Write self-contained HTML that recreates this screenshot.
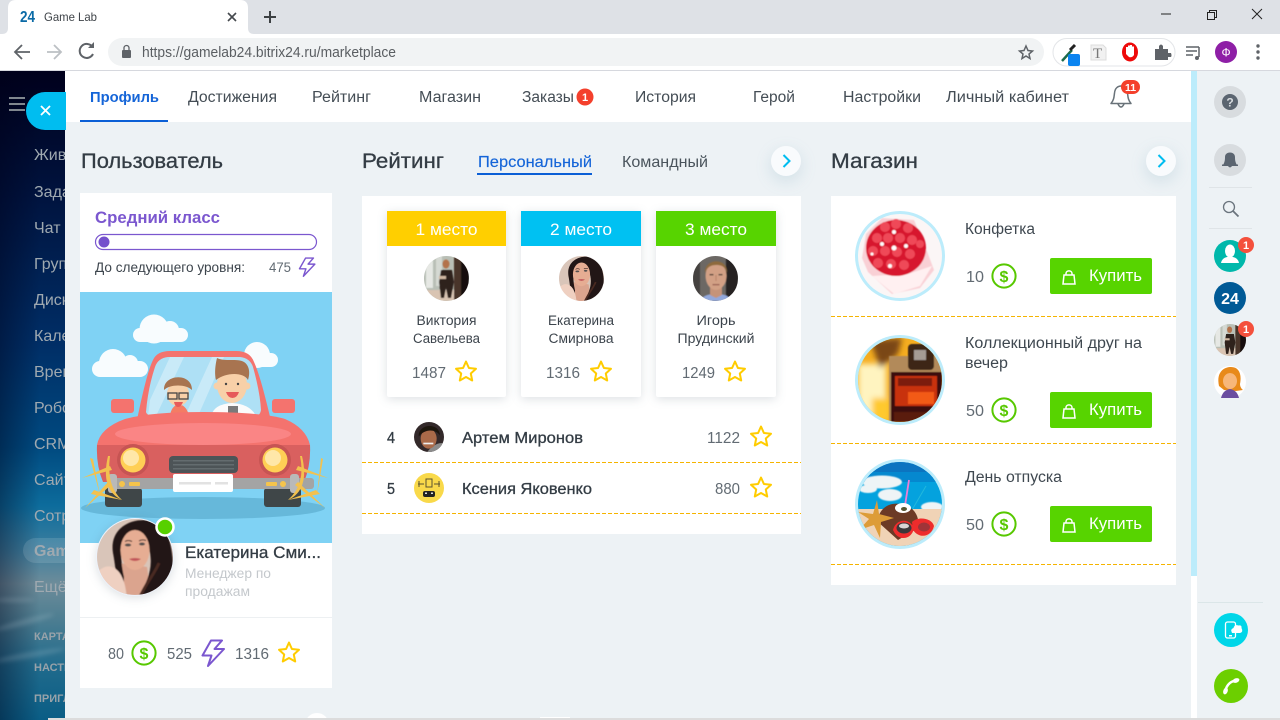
<!DOCTYPE html>
<html lang="ru"><head><meta charset="utf-8"><title>Game Lab</title>
<style>
html,body{margin:0;padding:0;width:1280px;height:720px;overflow:hidden;background:#edf2f5}
svg{display:block;position:absolute;left:0;top:0}
text{font-family:"Liberation Sans","DejaVu Sans",sans-serif;fill:#333c44;font-size:15px}
.h{font-size:21px;stroke:#333c44;stroke-width:.3}
.n{font-size:15.5px;fill:#444d55}
.s{fill:#9fa9b0;font-size:16px}
.c{fill:#98a2a9;font-size:11px;font-weight:bold}
.t{font-size:13.5px;fill:#3c444c;text-anchor:middle}
.v{font-size:15.5px;fill:#626b73}
.sb{stroke:#333c44;stroke-width:.3;font-size:15.500px}
.w{font-size:17px;fill:#fff;text-anchor:middle}
.b{font-size:16.5px;fill:#fff}
.p{font-size:15.5px;fill:#3f4850}
.dash{stroke:#f5b400;stroke-width:1;stroke-dasharray:4 2}
.shadow{filter:drop-shadow(0 2px 5px rgba(40,60,80,.16))}
.btnsh{filter:drop-shadow(0 5px 8px rgba(60,130,160,.16))}
</style></head>
<body>
<svg width="1280" height="720" viewBox="0 0 1280 720" xmlns="http://www.w3.org/2000/svg">
<defs>
<linearGradient id="sky" x1="0" y1="0" x2="0" y2="1">
<stop offset="0" stop-color="#00001c"/><stop offset=".2" stop-color="#001440"/><stop offset=".42" stop-color="#002e66"/><stop offset=".58" stop-color="#004a80"/><stop offset=".67" stop-color="#0d6c9c"/><stop offset=".74" stop-color="#3f7f9e"/><stop offset=".79" stop-color="#6d8c9a"/><stop offset=".84" stop-color="#507f92"/><stop offset=".92" stop-color="#1f6a8c"/><stop offset="1" stop-color="#0a5d85"/>
</linearGradient>
<linearGradient id="skyx" x1="0" y1="0" x2="1" y2="0"><stop offset="0" stop-color="#000018" stop-opacity=".4"/><stop offset=".6" stop-color="#000018" stop-opacity="0"/></linearGradient>
<filter id="bl05" x="-10%" y="-10%" width="120%" height="120%"><feGaussianBlur stdDeviation=".5"/></filter>
<filter id="bl1" x="-10%" y="-10%" width="120%" height="120%"><feGaussianBlur stdDeviation="1"/></filter>
<filter id="bl2"><feGaussianBlur stdDeviation="2"/></filter>
<filter id="bl3"><feGaussianBlur stdDeviation="3"/></filter>
<symbol id="star" viewBox="-12 -12 24 24" overflow="visible"><path d="M0-10.5L2.9-4 10-3.2 4.8 1.5 6.2 8.5 0 5-6.2 8.5-4.8 1.5-10-3.2-2.9-4Z" fill="#fff" stroke="#ffcc00" stroke-width="2" stroke-linejoin="round"/></symbol>
<symbol id="bolt" viewBox="-12 -14 24 28"><path d="M-2-12.5L-10.5 2.5H-1.5L-5 13 11-4H1.5L9-12.5Z" fill="#fff" stroke="#7b57cf" stroke-width="2" stroke-linejoin="round"/></symbol>
<symbol id="bag" viewBox="0 0 14 16"><path d="M2 6H12L13 15H1ZM4 6V4.5C4 1 10 1 10 4.500V6" fill="none" stroke="#fff" stroke-width="1.500"/></symbol>
<clipPath id="c76"><circle cx="38" cy="38" r="38"/></clipPath>
<clipPath id="c45"><circle cx="22.500" cy="22.500" r="22.500"/></clipPath>
<clipPath id="c84"><circle cx="42" cy="42" r="42"/></clipPath>
<symbol id="ekat" viewBox="0 0 76 76">
<g clip-path="url(#c76)"><rect width="76" height="76" fill="#d9c5b9"/>
<g filter="url(#bl05)">
<path d="M22 44L30 76H54L50 48Z" fill="#dba48e"/>
<path d="M16 34C12 8 36-2 54 2 72 6 78 26 76 76H42C50 64 56 50 53 34 50 18 36 12 29 18 23 24 23 40 27 58L26 76H20C20 60 18 44 16 34Z" fill="#231312"/>
<ellipse cx="38" cy="31" rx="14.500" ry="20" fill="#e6ad93"/>
<path d="M0 54C8 44 18 46 24 56 28 64 29 70 29 76H8C4 68 0 60 0 54Z" fill="#efd0c1"/>
<path d="M44 76C48 66 58 54 62 44" stroke="#4a2a22" stroke-width="3" fill="none"/>
<ellipse cx="31" cy="26" rx="3.200" ry="1.500" fill="#54504f"/><ellipse cx="45" cy="25" rx="3" ry="1.500" fill="#54504f"/>
<path d="M28 22.500Q31 20.500 35 22.500M42 22Q45 20 49 21.500" stroke="#3a2420" stroke-width="1" fill="none"/>
<path d="M32 40Q38 44 44 40Q38 38 32 40Z" fill="#c2565a"/>
</g></g></symbol>
<symbol id="vika" viewBox="0 0 45 45">
<g clip-path="url(#c45)"><rect width="45" height="45" fill="#b9bfb6"/>
<g filter="url(#bl05)"><rect x="2" width="7" height="32" fill="#e6e8e4"/><rect x="12" y="0" width="6" height="30" fill="#d5d9d3"/><rect x="30" width="15" height="45" fill="#4a342a"/><rect x="37" width="8" height="45" fill="#160e0c"/><rect y="34" width="30" height="11" fill="#d9c4b2"/>
<ellipse cx="22" cy="8" rx="3.500" ry="4.500" fill="#b3724c"/><path d="M17 14H28L30 26 27 42H24L22 32 20 42H17L15 26Z" fill="#2d201b"/><path d="M15 20H22V23H15Z" fill="#d0b8a2"/></g></g></symbol>
<symbol id="igor" viewBox="0 0 45 45">
<g clip-path="url(#c45)"><rect width="45" height="45" fill="#6c6864"/><g filter="url(#bl05)"><rect x="33" width="12" height="45" fill="#262220"/><rect width="7" height="45" fill="#454240"/>
<path d="M7 45C10 39 16 38 23 38 30 38 36 39 38 45Z" fill="#92a8dc"/><path d="M17 30H29V39L23 42 17 39Z" fill="#c69379"/><ellipse cx="23" cy="20" rx="10.500" ry="14" fill="#d2a085"/><path d="M12 17C11 2 35 1 34 17 32 10 28 9 23 9 18 9 14 11 12 17Z" fill="#8e6a3c"/><rect x="16.500" y="18" width="4" height="1.300" fill="#4a3a30"/><rect x="25.500" y="18" width="4" height="1.300" fill="#4a3a30"/><path d="M23 19V25" stroke="#b98368"/><rect x="19.500" y="28" width="7" height="1.300" fill="#9a5f52"/></g></g></symbol>
<symbol id="artem" viewBox="0 0 45 45">
<g clip-path="url(#c45)"><rect width="45" height="45" fill="#33292a"/><g filter="url(#bl05)"><path d="M20 45C26 36 36 30 45 32V45Z" fill="#8c8c8c"/><ellipse cx="22" cy="25" rx="12" ry="15" fill="#a96a4a"/><path d="M7 22C6 2 38 0 39 20 32 10 16 10 7 22Z" fill="#1d120d"/><rect x="14" y="31" width="15" height="2.500" fill="#eee"/></g></g></symbol>
<symbol id="cand" viewBox="0 0 84 84"><g clip-path="url(#c84)"><rect width="84" height="84" fill="#fbf6f6"/>
<g filter="url(#bl05)"><path d="M8 20L24 4 56 6 70 40 76 56 62 74 34 80 10 58 4 44Z" fill="#f9d0d5"/><path d="M14 62L36 80 62 72 74 52 50 60Z" fill="#fff0f1"/>
<ellipse cx="38" cy="34" rx="30" ry="28" fill="#d7192f"/>
<g fill="#ef4a58"><circle cx="27" cy="13" r="5"/><circle cx="38" cy="10" r="5"/><circle cx="50" cy="14" r="5"/><circle cx="19" cy="24" r="5"/><circle cx="30" cy="24" r="5"/><circle cx="42" cy="24" r="5"/><circle cx="54" cy="26" r="5"/><circle cx="62" cy="30" r="4"/><circle cx="15" cy="37" r="5"/><circle cx="27" cy="37" r="5"/><circle cx="39" cy="38" r="5"/><circle cx="52" cy="40" r="5"/><circle cx="20" cy="49" r="5"/><circle cx="33" cy="50" r="5"/><circle cx="46" cy="51" r="5"/></g>
<g fill="#fff"><circle cx="36" cy="18" r="2"/><circle cx="24" cy="30" r="2"/><circle cx="36" cy="34" r="2.500"/><circle cx="48" cy="32" r="2"/><circle cx="32" cy="52" r="2"/><circle cx="14" cy="40" r="1.500"/></g></g></g></symbol>
<symbol id="whisky" viewBox="0 0 84 84"><g clip-path="url(#c84)"><rect width="84" height="84" fill="#f5ad20"/>
<g filter="url(#bl3)"><rect x="0" y="26" width="28" height="58" fill="#fff4c0"/><path d="M12 2L44 0 40 16 22 30Z" fill="#7a4614"/><rect x="14" y="60" width="18" height="24" fill="#ffc92e"/></g>
<g filter="url(#bl05)"><rect x="31" y="18" width="53" height="66" fill="#b28a5a"/><rect x="33" y="34" width="51" height="50" fill="#3e0d08"/><rect x="37" y="38" width="42" height="30" fill="#c8300c"/><rect x="40" y="40" width="34" height="8" fill="#7c1a08"/><rect x="50" y="54" width="26" height="12" fill="#f25a12"/><rect x="50" y="6" width="26" height="26" rx="4" fill="#3d2518"/><rect x="56" y="12" width="12" height="10" fill="#a59c94"/><rect x="36" y="74" width="40" height="10" fill="#5a1a0c"/></g></g></symbol>
<symbol id="beach" viewBox="0 0 84 84"><g clip-path="url(#c84)"><rect width="84" height="84" fill="#04a2de"/><rect width="84" height="16" fill="#0b74c0"/><rect y="10" width="84" height="10" fill="#0588cf"/>
<g fill="#eef4f6" filter="url(#bl05)"><ellipse cx="24" cy="20" rx="20" ry="6.500"/><ellipse cx="10" cy="27" rx="9" ry="4"/><ellipse cx="32" cy="33" rx="12" ry="6"/><ellipse cx="74" cy="45" rx="11" ry="5"/></g>
<rect y="47" width="84" height="37" fill="#f0d3b6"/>
<path d="M51 18L46 50" stroke="#ee7ed6" stroke-width="1.800"/><path d="M68 24L54 48" stroke="#22b8dc" stroke-width="1"/>
<path d="M20 60C20 46 32 40 42 42 56 44 62 54 60 66L40 78Z" fill="#6c3a26"/><ellipse cx="45" cy="46" rx="8" ry="5" fill="#fff"/><ellipse cx="46" cy="47" rx="3" ry="2" fill="#553"/>
<path d="M19 38L21 52 36 56 23 60 22 76 16 63 1 68 11 57 0 50 15 52Z" fill="#dd9c38"/>
<path d="M35 68C38 56 52 56 56 66 54 78 40 80 35 68ZM54 60C60 54 74 56 76 64 74 74 62 78 55 68Z" fill="#ee2c2c"/>
<ellipse cx="46" cy="66" rx="7.500" ry="5.500" fill="#3c383a"/><ellipse cx="46" cy="64" rx="5" ry="2.500" fill="#d9d4d4"/><ellipse cx="66" cy="65" rx="6" ry="4.500" fill="#a03438"/></g></symbol>
<symbol id="coin" viewBox="0 0 26 26"><circle cx="13" cy="13" r="11.600" fill="#fff" stroke="#57c800" stroke-width="2"/></symbol>
</defs>

<!-- browser chrome -->
<rect width="1280" height="34" fill="#dee1e6"/>
<rect y="34" width="1280" height="37" fill="#fff"/>
<rect y="70" width="1280" height="1" fill="#d6d8de"/>
<path d="M0 34H2Q8 34 8 28V8Q8 0 16 0H240Q248 0 248 8V28Q248 34 254 34H256Z" fill="#fff"/>
<text x="20" y="22" font-weight="bold" textLength="15" lengthAdjust="spacingAndGlyphs" style="fill:#0a6aa6;font-size:16px">24</text>
<text x="44" y="21" textLength="53" lengthAdjust="spacingAndGlyphs" style="font-size:12px;fill:#3f4449">Game Lab</text>
<path d="M228 13L236 21M236 13L228 21" stroke="#45494e" stroke-width="1.600"/>
<path d="M270 11V23M264 17H276" stroke="#3c4043" stroke-width="2"/>
<path d="M1161 14H1171" stroke="#222" stroke-width="1"/>
<path d="M1207.500 12.500H1214.500V19.500H1207.500ZM1209.500 12V10.500H1216.500V17.500H1215" fill="none" stroke="#222" stroke-width="1"/>
<path d="M1252 9L1262 19M1262 9L1252 19" stroke="#222" stroke-width="1"/>
<path d="M30 52H15M22 45L15 52 22 59" fill="none" stroke="#5f6368" stroke-width="1.800"/>
<path d="M47 52H61M54 45L61 52 54 59" fill="none" stroke="#bcc0c4" stroke-width="1.800"/>
<path d="M92.500 47A7 7 0 1 0 93 54" fill="none" stroke="#5f6368" stroke-width="2"/><path d="M88 48H94V42Z" fill="#5f6368"/>
<rect x="108" y="38" width="936" height="28" rx="14" fill="#f1f3f4"/>
<rect x="122" y="50" width="9" height="8" rx="1" fill="#5f6368"/><path d="M124 50V48A2.500 2.500 0 0 1 129 48V50" fill="none" stroke="#5f6368" stroke-width="1.300"/>
<text x="142" y="57" textLength="254" lengthAdjust="spacingAndGlyphs" style="font-size:14.5px;fill:#5a5e62">https://gamelab24.bitrix24.ru/marketplace</text>
<path d="M1026 46L1028 50.500 1032.500 51 1029 54 1030 58.500 1026 56 1022 58.500 1023 54 1019.500 51 1024 50.500Z" fill="none" stroke="#5f6368" stroke-width="1.500"/>
<rect x="1053" y="38.500" width="122" height="27.500" rx="13.700" fill="#fff" stroke="#e3e5e8"/>
<path d="M1062 61L1072 50" stroke="#1c6a4a" stroke-width="2.500"/><path d="M1070 50L1075 45" stroke="#222" stroke-width="3"/>
<rect x="1068" y="54" width="12" height="12" rx="2" fill="#0a84f0"/>
<path d="M1091 45H1103L1106 48V60H1091Z" fill="#f1f1f1" stroke="#ddd"/><text x="1093" y="58" style="font-family:'Liberation Serif',serif;font-size:15px;fill:#777">T</text>
<ellipse cx="1130" cy="52" rx="8" ry="9.500" fill="#ee0a0a"/><path d="M1126 50V47H1128V45.500H1130V45H1132V46.500H1134V55Q1132 58 1129 57L1126 54Z" fill="#fff"/>
<path d="M1155 49H1159V46Q1161 43 1163 46V49H1168V53H1171Q1172 56 1171 57H1168V60H1155Z" fill="#5f6368"/>
<path d="M1186 47H1199M1186 51H1197M1186 55H1193" stroke="#5f6368" stroke-width="1.500"/><path d="M1199 47V57" stroke="#5f6368" stroke-width="1.500"/><circle cx="1197" cy="58" r="2" fill="#5f6368"/>
<circle cx="1226" cy="52" r="11" fill="#8e1fa6"/><text x="1226" y="56.500" text-anchor="middle" style="font-size:12px;fill:#fff">Ф</text>
<g fill="#5f6368"><circle cx="1258" cy="46" r="1.700"/><circle cx="1258" cy="52" r="1.700"/><circle cx="1258" cy="58" r="1.700"/></g>

<!-- left sidebar -->
<rect y="71" width="66" height="649" fill="url(#sky)"/>
<rect y="71" width="66" height="649" fill="url(#skyx)"/>
<g filter="url(#bl2)" fill="#d8e2e8" opacity=".16"><ellipse cx="25" cy="622" rx="30" ry="3" transform="rotate(-15 25 622)"/><ellipse cx="30" cy="655" rx="35" ry="3" transform="rotate(-10 30 655)"/><ellipse cx="15" cy="600" rx="20" ry="2"/></g>
<g fill="#80878f"><rect x="9" y="97" width="16" height="2"/><rect x="9" y="103" width="16" height="2"/><rect x="9" y="109" width="16" height="2"/></g>
<rect x="23" y="538" width="60" height="25" rx="12.500" fill="#fff" fill-opacity=".12"/>
<text x="34" y="160" class="s">Живая лента</text>
<text x="34" y="197" class="s">Задачи и Проекты</text>
<text x="34" y="233" class="s">Чат и Звонки</text>
<text x="34" y="269" class="s">Группы</text>
<text x="34" y="305" class="s">Диск</text>
<text x="34" y="341" class="s">Календарь</text>
<text x="34" y="377" class="s">Время и отчёты</text>
<text x="34" y="413" class="s">Роботы</text>
<text x="34" y="449" class="s">CRM</text>
<text x="34" y="485" class="s">Сайты</text>
<text x="34" y="521" class="s">Сотрудники</text>
<text x="34" y="556" class="s" font-weight="bold">Game Lab</text>
<text x="34" y="592" class="s">Ещё</text>
<text x="34" y="640" class="c">КАРТА САЙТА</text>
<text x="34" y="671" class="c">НАСТРОИТЬ МЕНЮ</text>
<text x="34" y="702" class="c">ПРИГЛАСИТЬ</text>

<!-- content -->
<rect x="65" y="71" width="1126" height="649" fill="#edf2f5"/>
<rect x="65" y="71" width="1126" height="51" fill="#fff"/>
<rect x="1191" y="71" width="7" height="505" fill="#bcecfb"/>
<rect x="1191" y="576" width="6" height="142" fill="#fff"/>
<rect x="1197" y="71" width="83" height="649" fill="#edf2f5"/>
<rect x="26" y="92" width="40" height="38" fill="#00bdf0" style="clip-path:inset(0 0 0 0 round 19px 0 0 19px)"/>
<path d="M41 106L50 115M50 106L41 115" stroke="#fff" stroke-width="1.800"/>

<!-- top nav -->
<text x="90" y="102" textLength="69" lengthAdjust="spacingAndGlyphs" font-weight="bold" style="fill:#1565d8;font-size:15px">Профиль</text>
<rect x="80" y="120" width="88" height="2" fill="#0b5fd6"/>
<text x="188" y="102" class="n" textLength="89" lengthAdjust="spacingAndGlyphs">Достижения</text>
<text x="312" y="102" class="n" textLength="59" lengthAdjust="spacingAndGlyphs">Рейтинг</text>
<text x="419" y="102" class="n" textLength="62" lengthAdjust="spacingAndGlyphs">Магазин</text>
<text x="522" y="102" class="n" textLength="52" lengthAdjust="spacingAndGlyphs">Заказы</text>
<circle cx="585" cy="97" r="8.500" fill="#f4402c"/><text x="585" y="101" text-anchor="middle" font-weight="bold" style="font-size:11px;fill:#fff">1</text>
<text x="635" y="102" class="n" textLength="61" lengthAdjust="spacingAndGlyphs">История</text>
<text x="753" y="102" class="n" textLength="42" lengthAdjust="spacingAndGlyphs">Герой</text>
<text x="843" y="102" class="n" textLength="78" lengthAdjust="spacingAndGlyphs">Настройки</text>
<text x="946" y="102" class="n" textLength="123" lengthAdjust="spacingAndGlyphs">Личный кабинет</text>
<path d="M1111 103.500C1114 100 1114 97 1114.500 93 1115 88 1118 86 1121 86 1124 86 1127 88 1127.500 93 1128 97 1128 100 1131 103.500ZM1118 104Q1121 110 1124 104" fill="#fff" stroke="#697279" stroke-width="1.500" stroke-linejoin="round"/>
<rect x="1121" y="80" width="19" height="14" rx="7" fill="#f4402c"/><text x="1130.500" y="91" text-anchor="middle" font-weight="bold" style="font-size:10.500px;fill:#fff">11</text>

<!-- user column -->
<text x="81" y="168" class="h" textLength="142" lengthAdjust="spacingAndGlyphs">Пользователь</text>
<rect x="80" y="193" width="252" height="495" fill="#fff"/>
<text x="95" y="223" font-weight="bold" textLength="125" lengthAdjust="spacingAndGlyphs" style="font-size:17px;fill:#7b57cf">Средний класс</text>
<rect x="95.500" y="234.500" width="221" height="15" rx="7.500" fill="#fff" stroke="#7b57cf" stroke-width="1.200"/>
<circle cx="104" cy="242" r="5.500" fill="#7450cc"/>
<text x="95" y="272" textLength="150" lengthAdjust="spacingAndGlyphs" style="font-size:13.5px;fill:#3c444c">До следующего уровня:</text>
<text x="269" y="272" textLength="22" lengthAdjust="spacingAndGlyphs" style="font-size:13.5px;fill:#626b73">475</text>
<use href="#bolt" x="298" y="257" width="18" height="20"/>

<!-- illustration -->
<rect x="80" y="292" width="252" height="251" fill="#7fd2f4"/>
<g fill="#fff" opacity=".95">
<rect x="133" y="328" width="55" height="14" rx="7"/><circle cx="154" cy="329" r="14.500"/><circle cx="170" cy="330" r="9"/>
<rect x="92" y="361" width="56" height="16" rx="8"/><circle cx="113" cy="363" r="14"/><circle cx="130" cy="363" r="8"/>
<rect x="240" y="353" width="38" height="14" rx="7"/><circle cx="257" cy="355" r="13"/>
</g>
<ellipse cx="203" cy="508" rx="122" ry="11" fill="#66b8da"/>
<rect x="111" y="399" width="23" height="14" rx="3" fill="#f4736e"/><rect x="272" y="399" width="23" height="14" rx="3" fill="#f4736e"/>
<path d="M136 425C142 395 148 370 153 360Q157 351 170 351H236Q250 351 254 362C260 375 266 400 272 425Z" fill="#f4736e"/>
<path d="M146 412Q148 388 155 367Q158 358 168 357H240Q250 358 253 367Q260 392 261 410Q260 416 255 416H155Q147 416 146 412Z" fill="#aee0f5"/>
<path d="M150 400L170 357H184L156 416H148ZM185 416L212 357H224L198 416Z" fill="#c9eaf8"/>
<path d="M170 416Q171 406 179 404 187 406 189 416Z" fill="#f47c64"/>
<ellipse cx="178" cy="394" rx="11" ry="12" fill="#f8d0a8"/><path d="M164 390C163 374 192 372 192 390 186 384 170 384 164 390Z" fill="#a87450"/>
<rect x="168" y="393" width="9" height="6" fill="none" stroke="#444" stroke-width="1.300"/><rect x="179" y="393" width="9" height="6" fill="none" stroke="#444" stroke-width="1.300"/>
<path d="M174 402H183Q181 407 178 407Q175 407 174 402Z" fill="#e65a5a"/>
<path d="M211 416Q214 404 232 403 250 404 256 416Z" fill="#fbfbfb"/>
<rect x="228" y="406" width="10" height="11" fill="#7a7a7a"/>
<ellipse cx="232" cy="385" rx="15" ry="18" fill="#f8d0a8"/><circle cx="217" cy="386" r="3.500" fill="#f8d0a8"/><circle cx="247" cy="386" r="3.500" fill="#f8d0a8"/>
<path d="M216 380C214 372 216 362 217 358 224 362 238 358 244 362 250 366 250 374 248 380 244 372 226 372 216 380Z" fill="#a87450"/>
<path d="M226 392H239Q237 398 232.500 398Q228 398 226 392Z" fill="#e65a5a"/>
<circle cx="226" cy="384" r="1.200" fill="#444"/><circle cx="238" cy="384" r="1.200" fill="#444"/>
<rect x="166" y="417" width="17" height="3" rx="1" fill="#d9605f"/><rect x="223" y="417" width="17" height="3" rx="1" fill="#d9605f"/>
<path d="M97 445Q100 428 125 419Q150 412 203 412Q260 412 285 419Q306 428 310 445Z" fill="#f4736e"/>
<ellipse cx="203" cy="434" rx="88" ry="11" fill="#fa8585"/>
<path d="M97 445H310Q311 465 304 482H103Q96 465 97 445Z" fill="#d9605f"/>
<circle cx="133" cy="460" r="16" fill="#c65453"/><circle cx="275" cy="460" r="16" fill="#c65453"/>
<circle cx="133" cy="460" r="12.500" fill="#ffcf55"/><circle cx="275" cy="460" r="12.500" fill="#ffcf55"/><circle cx="131" cy="458" r="8" fill="#ffe7a8"/><circle cx="273" cy="458" r="8" fill="#ffe7a8"/>
<rect x="169" y="456" width="69" height="17" rx="4" fill="#4d5457"/><g fill="#646c6f"><rect x="173" y="460" width="61" height="1.500"/><rect x="173" y="464" width="61" height="1.500"/><rect x="173" y="468" width="61" height="1.500"/></g>
<rect x="105" y="488" width="37" height="19" rx="3" fill="#3f4648"/><rect x="264" y="488" width="37" height="19" rx="3" fill="#3f4648"/>
<rect x="108" y="478" width="206" height="11" rx="3" fill="#a4a4a4"/>
<rect x="108" y="474" width="9" height="19" rx="3" fill="#b9b9b9"/><rect x="290" y="474" width="9" height="19" rx="3" fill="#b9b9b9"/>
<rect x="173" y="474" width="60" height="18" rx="2" fill="#fff"/><rect x="179" y="482" width="32" height="2.500" fill="#e2e2e2"/><rect x="215" y="482" width="13" height="2.500" fill="#e2e2e2"/>
<circle cx="122" cy="484" r="3" fill="#f5c44c"/><rect x="129" y="482" width="11" height="4" rx="1" fill="#f5c44c"/><circle cx="283" cy="484" r="3" fill="#f5c44c"/><rect x="266" y="482" width="11" height="4" rx="1" fill="#f5c44c"/>
<g fill="#f3c14e">
<path d="M82 478L110 466 112 470Z"/><path d="M110 456Q106 486 122 500 100 490 108 456Z"/><path d="M85 508L108 482 111 485Z"/><path d="M91 494L122 500 94 490Z"/><path d="M90 458L100 495 93 459Z"/>
<path d="M328 478L298 466 296 470Z"/><path d="M300 456Q306 484 288 500 310 490 302 456Z"/><path d="M321 458L317 495 323 459Z"/><path d="M325 508L298 482 295 485Z"/><path d="M320 494L288 500 316 490Z"/>
</g>

<circle cx="135" cy="557" r="39" fill="#edf2fb" class="shadow"/>
<use href="#ekat" x="97" y="519" width="76" height="76"/>
<circle cx="165" cy="527" r="8.500" fill="#57d000" stroke="#fff" stroke-width="2.500"/>
<text x="185" y="558" class="sb" textLength="136" lengthAdjust="spacingAndGlyphs" style="font-size:17px">Екатерина Сми...</text>
<text x="185" y="578" textLength="86" lengthAdjust="spacingAndGlyphs" style="font-size:13.5px;fill:#c4c8cc">Менеджер по</text>
<text x="185" y="596" textLength="65" lengthAdjust="spacingAndGlyphs" style="font-size:13.5px;fill:#c4c8cc">продажам</text>
<rect x="80" y="617" width="252" height="1" fill="#edf0f2"/>
<text x="108" y="659" class="v" textLength="16" lengthAdjust="spacingAndGlyphs">80</text>
<use href="#coin" x="131" y="640" width="26" height="26"/><text x="144" y="659" text-anchor="middle" font-weight="bold" style="font-size:16px;fill:#57c800">$</text>
<text x="167" y="659" class="v" textLength="25" lengthAdjust="spacingAndGlyphs">525</text>
<use href="#bolt" x="201" y="639" width="24" height="28"/>
<text x="235" y="659" class="v" textLength="34" lengthAdjust="spacingAndGlyphs">1316</text>
<use href="#star" x="277" y="641" width="24" height="24"/>

<!-- rating column -->
<text x="362" y="168" class="h" textLength="82" lengthAdjust="spacingAndGlyphs">Рейтинг</text>
<text x="478" y="167" textLength="114" lengthAdjust="spacingAndGlyphs" style="font-size:16px;fill:#1565d8;stroke:#1565d8;stroke-width:.15">Персональный</text>
<rect x="477" y="173" width="115" height="2" fill="#0b5fd6"/>
<text x="622" y="167" textLength="86" lengthAdjust="spacingAndGlyphs" style="font-size:16px;fill:#4a545c">Командный</text>
<circle cx="786" cy="161" r="15" fill="#f9fbfd" class="btnsh"/><path d="M783.500 155L789.500 161 783.500 167" fill="none" stroke="#00bdf0" stroke-width="2"/>
<rect x="362" y="196" width="439" height="338" fill="#fff"/>

<rect x="387" y="211" width="119" height="186" rx="2" fill="#fff" class="shadow"/>
<rect x="521" y="211" width="120" height="186" rx="2" fill="#fff" class="shadow"/>
<rect x="656" y="211" width="120" height="186" rx="2" fill="#fff" class="shadow"/>
<rect x="387" y="211" width="119" height="35" fill="#ffcf00"/>
<rect x="521" y="211" width="120" height="35" fill="#00c1f2"/>
<rect x="656" y="211" width="120" height="35" fill="#57d400"/>
<text x="446.500" y="235" class="w" textLength="62" lengthAdjust="spacingAndGlyphs">1 место</text>
<text x="581" y="235" class="w" textLength="62" lengthAdjust="spacingAndGlyphs">2 место</text>
<text x="716" y="235" class="w" textLength="62" lengthAdjust="spacingAndGlyphs">3 место</text>
<use href="#vika" x="424" y="256" width="45" height="45"/>
<use href="#ekat" x="559" y="256" width="45" height="45"/>
<use href="#igor" x="693" y="256" width="45" height="45"/>
<text x="446.500" y="325" class="t" textLength="60" lengthAdjust="spacingAndGlyphs">Виктория</text>
<text x="446.500" y="343" class="t" textLength="67" lengthAdjust="spacingAndGlyphs">Савельева</text>
<text x="581" y="325" class="t" textLength="66" lengthAdjust="spacingAndGlyphs">Екатерина</text>
<text x="581" y="343" class="t" textLength="65" lengthAdjust="spacingAndGlyphs">Смирнова</text>
<text x="716" y="325" class="t" textLength="39" lengthAdjust="spacingAndGlyphs">Игорь</text>
<text x="716" y="343" class="t" textLength="77" lengthAdjust="spacingAndGlyphs">Прудинский</text>
<text x="412" y="378" class="v" textLength="34" lengthAdjust="spacingAndGlyphs">1487</text><use href="#star" x="454" y="360" width="24" height="24"/>
<text x="546" y="378" class="v" textLength="34" lengthAdjust="spacingAndGlyphs">1316</text><use href="#star" x="589" y="360" width="24" height="24"/>
<text x="682" y="378" class="v" textLength="33" lengthAdjust="spacingAndGlyphs">1249</text><use href="#star" x="723" y="360" width="24" height="24"/>

<text x="387" y="443" class="sb" textLength="8" lengthAdjust="spacingAndGlyphs">4</text>
<use href="#artem" x="414" y="422" width="30" height="30"/>
<text x="462" y="443" class="sb" textLength="121" lengthAdjust="spacingAndGlyphs">Артем Миронов</text>
<text x="707" y="443" class="v" textLength="33" lengthAdjust="spacingAndGlyphs">1122</text><use href="#star" x="749" y="425" width="24" height="24"/>
<line x1="362" y1="462.500" x2="801" y2="462.500" class="dash"/>
<text x="387" y="494" class="sb" textLength="8" lengthAdjust="spacingAndGlyphs">5</text>
<circle cx="429" cy="488" r="15" fill="#f9d94a"/>
<path d="M418 484H424M434 484H440M426 479H432V487H426ZM419 481V487M439 481V487" fill="none" stroke="#5a5230" stroke-width="1"/><rect x="423" y="491" width="12" height="6" rx="2" fill="#222"/><rect x="425" y="492.500" width="2" height="1.500" fill="#ddd"/><rect x="431" y="492.500" width="2" height="1.500" fill="#ddd"/>
<text x="462" y="494" class="sb" textLength="130" lengthAdjust="spacingAndGlyphs">Ксения Яковенко</text>
<text x="715" y="494" class="v" textLength="25" lengthAdjust="spacingAndGlyphs">880</text><use href="#star" x="749" y="476" width="24" height="24"/>
<line x1="362" y1="513.500" x2="801" y2="513.500" class="dash"/>

<!-- shop column -->
<text x="831" y="168" class="h" textLength="87" lengthAdjust="spacingAndGlyphs">Магазин</text>
<circle cx="1161" cy="161" r="15" fill="#f9fbfd" class="btnsh"/><path d="M1158.500 155L1164.500 161 1158.500 167" fill="none" stroke="#00bdf0" stroke-width="2"/>
<rect x="831" y="196" width="345" height="389" fill="#fff"/>

<circle cx="900" cy="256" r="45" fill="#bcecfb"/><use href="#cand" x="858" y="214" width="84" height="84"/>
<text x="965" y="234" class="p" textLength="70" lengthAdjust="spacingAndGlyphs">Конфетка</text>
<text x="966" y="282" class="v" textLength="18" lengthAdjust="spacingAndGlyphs">10</text>
<use href="#coin" x="991" y="263" width="26" height="26"/><text x="1004" y="282" text-anchor="middle" font-weight="bold" style="font-size:16px;fill:#57c800">$</text>
<rect x="1050" y="258" width="102" height="36" rx="2" fill="#57d400"/><use href="#bag" x="1062" y="269" width="14" height="16"/>
<text x="1089" y="281" class="b" textLength="53" lengthAdjust="spacingAndGlyphs">Купить</text>
<line x1="831" y1="316.500" x2="1176" y2="316.500" class="dash"/>

<circle cx="900" cy="380" r="45" fill="#bcecfb"/><use href="#whisky" x="858" y="338" width="84" height="84"/>
<text x="965" y="348" class="p" textLength="177" lengthAdjust="spacingAndGlyphs">Коллекционный друг на</text>
<text x="965" y="368" class="p" textLength="43" lengthAdjust="spacingAndGlyphs">вечер</text>
<text x="966" y="416" class="v" textLength="18" lengthAdjust="spacingAndGlyphs">50</text>
<use href="#coin" x="991" y="397" width="26" height="26"/><text x="1004" y="416" text-anchor="middle" font-weight="bold" style="font-size:16px;fill:#57c800">$</text>
<rect x="1050" y="392" width="102" height="36" rx="2" fill="#57d400"/><use href="#bag" x="1062" y="403" width="14" height="16"/>
<text x="1089" y="415" class="b" textLength="53" lengthAdjust="spacingAndGlyphs">Купить</text>
<line x1="831" y1="443.500" x2="1176" y2="443.500" class="dash"/>

<circle cx="900" cy="504" r="45" fill="#bcecfb"/><use href="#beach" x="858" y="462" width="84" height="84"/>
<text x="965" y="482" class="p" textLength="97" lengthAdjust="spacingAndGlyphs">День отпуска</text>
<text x="966" y="530" class="v" textLength="18" lengthAdjust="spacingAndGlyphs">50</text>
<use href="#coin" x="991" y="511" width="26" height="26"/><text x="1004" y="530" text-anchor="middle" font-weight="bold" style="font-size:16px;fill:#57c800">$</text>
<rect x="1050" y="506" width="102" height="36" rx="2" fill="#57d400"/><use href="#bag" x="1062" y="517" width="14" height="16"/>
<text x="1089" y="529" class="b" textLength="53" lengthAdjust="spacingAndGlyphs">Купить</text>
<line x1="831" y1="564.500" x2="1176" y2="564.500" class="dash"/>

<!-- right rail -->
<circle cx="1230" cy="102" r="16" fill="#d8dcdf"/><circle cx="1230" cy="102" r="8" fill="#5b6570"/>
<text x="1230" y="106.500" text-anchor="middle" font-weight="bold" style="font-size:12px;fill:#d8dcdf">?</text>
<circle cx="1230" cy="160" r="16" fill="#d8dcdf"/>
<path d="M1223 165C1225 162 1225 159 1225 157 1225 151 1235 151 1235 157 1235 159 1235 162 1237 165ZM1228 166Q1230 169 1232 166" fill="#5b6570"/><rect x="1222" y="164.500" width="16" height="1.500" fill="#5b6570"/>
<rect x="1209" y="187" width="43" height="1" fill="#dfe4e7"/>
<circle cx="1229" cy="207" r="5.500" fill="none" stroke="#6a747d" stroke-width="1.300"/><path d="M1233 211L1238.500 216.500" stroke="#6a747d" stroke-width="1.800"/>
<rect x="1209" y="228" width="43" height="1" fill="#dfe4e7"/>
<circle cx="1230" cy="256" r="16" fill="#00b8ab"/>
<ellipse cx="1230" cy="251" rx="5" ry="6.500" fill="#fff"/><path d="M1221 263Q1222 258 1227 257H1233Q1238 258 1239 263Z" fill="#fff"/>
<circle cx="1246" cy="245" r="8" fill="#f4503c"/><text x="1246" y="249" text-anchor="middle" font-weight="bold" style="font-size:11px;fill:#fff">1</text>
<circle cx="1230" cy="298" r="16" fill="#005a96"/><text x="1230" y="304" text-anchor="middle" font-weight="bold" style="font-size:16px;fill:#fff">24</text>
<use href="#vika" x="1214" y="324" width="32" height="32"/>
<circle cx="1246" cy="329" r="8" fill="#f4503c"/><text x="1246" y="333" text-anchor="middle" font-weight="bold" style="font-size:11px;fill:#fff">1</text>
<circle cx="1230" cy="382" r="16" fill="#fff"/>
<path d="M1219 386C1216 372 1224 367 1231 367 1239 367 1242 374 1240 384 1240 388 1243 390 1243 390L1236 391 1224 390Z" fill="#e88a1a"/>
<ellipse cx="1230" cy="381" rx="7" ry="8" fill="#f7b77a"/>
<path d="M1221 398Q1223 390 1230 389 1237 390 1239 398Z" fill="#6b4ea0"/><path d="M1222 376Q1230 370 1238 376L1237 372 1229 370Z" fill="#e88a1a"/>
<rect x="1198" y="602" width="65" height="1" fill="#dbe6e8"/>
<circle cx="1231" cy="630" r="17" fill="#00d6e8"/>
<rect x="1225.500" y="622" width="10" height="16" rx="2" fill="none" stroke="#fff" stroke-width="1.300"/><rect x="1229" y="635" width="3" height="1.500" fill="#fff"/>
<path d="M1232 633Q1230 629 1233.500 628 1234.500 624 1238.500 625.500 1242 625 1241.500 628 1243.500 632 1240 633Z" fill="#fff"/>
<circle cx="1231" cy="686" r="17" fill="#6ccf00"/>
<path d="M1238 680.500C1232 680 1226.500 684 1225 692" fill="none" stroke="#fff" stroke-width="2.500"/><ellipse cx="1236" cy="680.500" rx="3.500" ry="2.200" fill="#fff" transform="rotate(-20 1236 680.500)"/><ellipse cx="1225.500" cy="691" rx="2.200" ry="3.500" fill="#fff" transform="rotate(20 1225.500 691)"/>

<!-- bottom edge -->
<circle cx="317" cy="725" r="12" fill="#fff"/>
<rect x="48" y="718" width="1232" height="2" fill="#dcdcdc"/>
<rect x="540" y="717" width="30" height="1" fill="#fff"/>
</svg>
</body></html>
